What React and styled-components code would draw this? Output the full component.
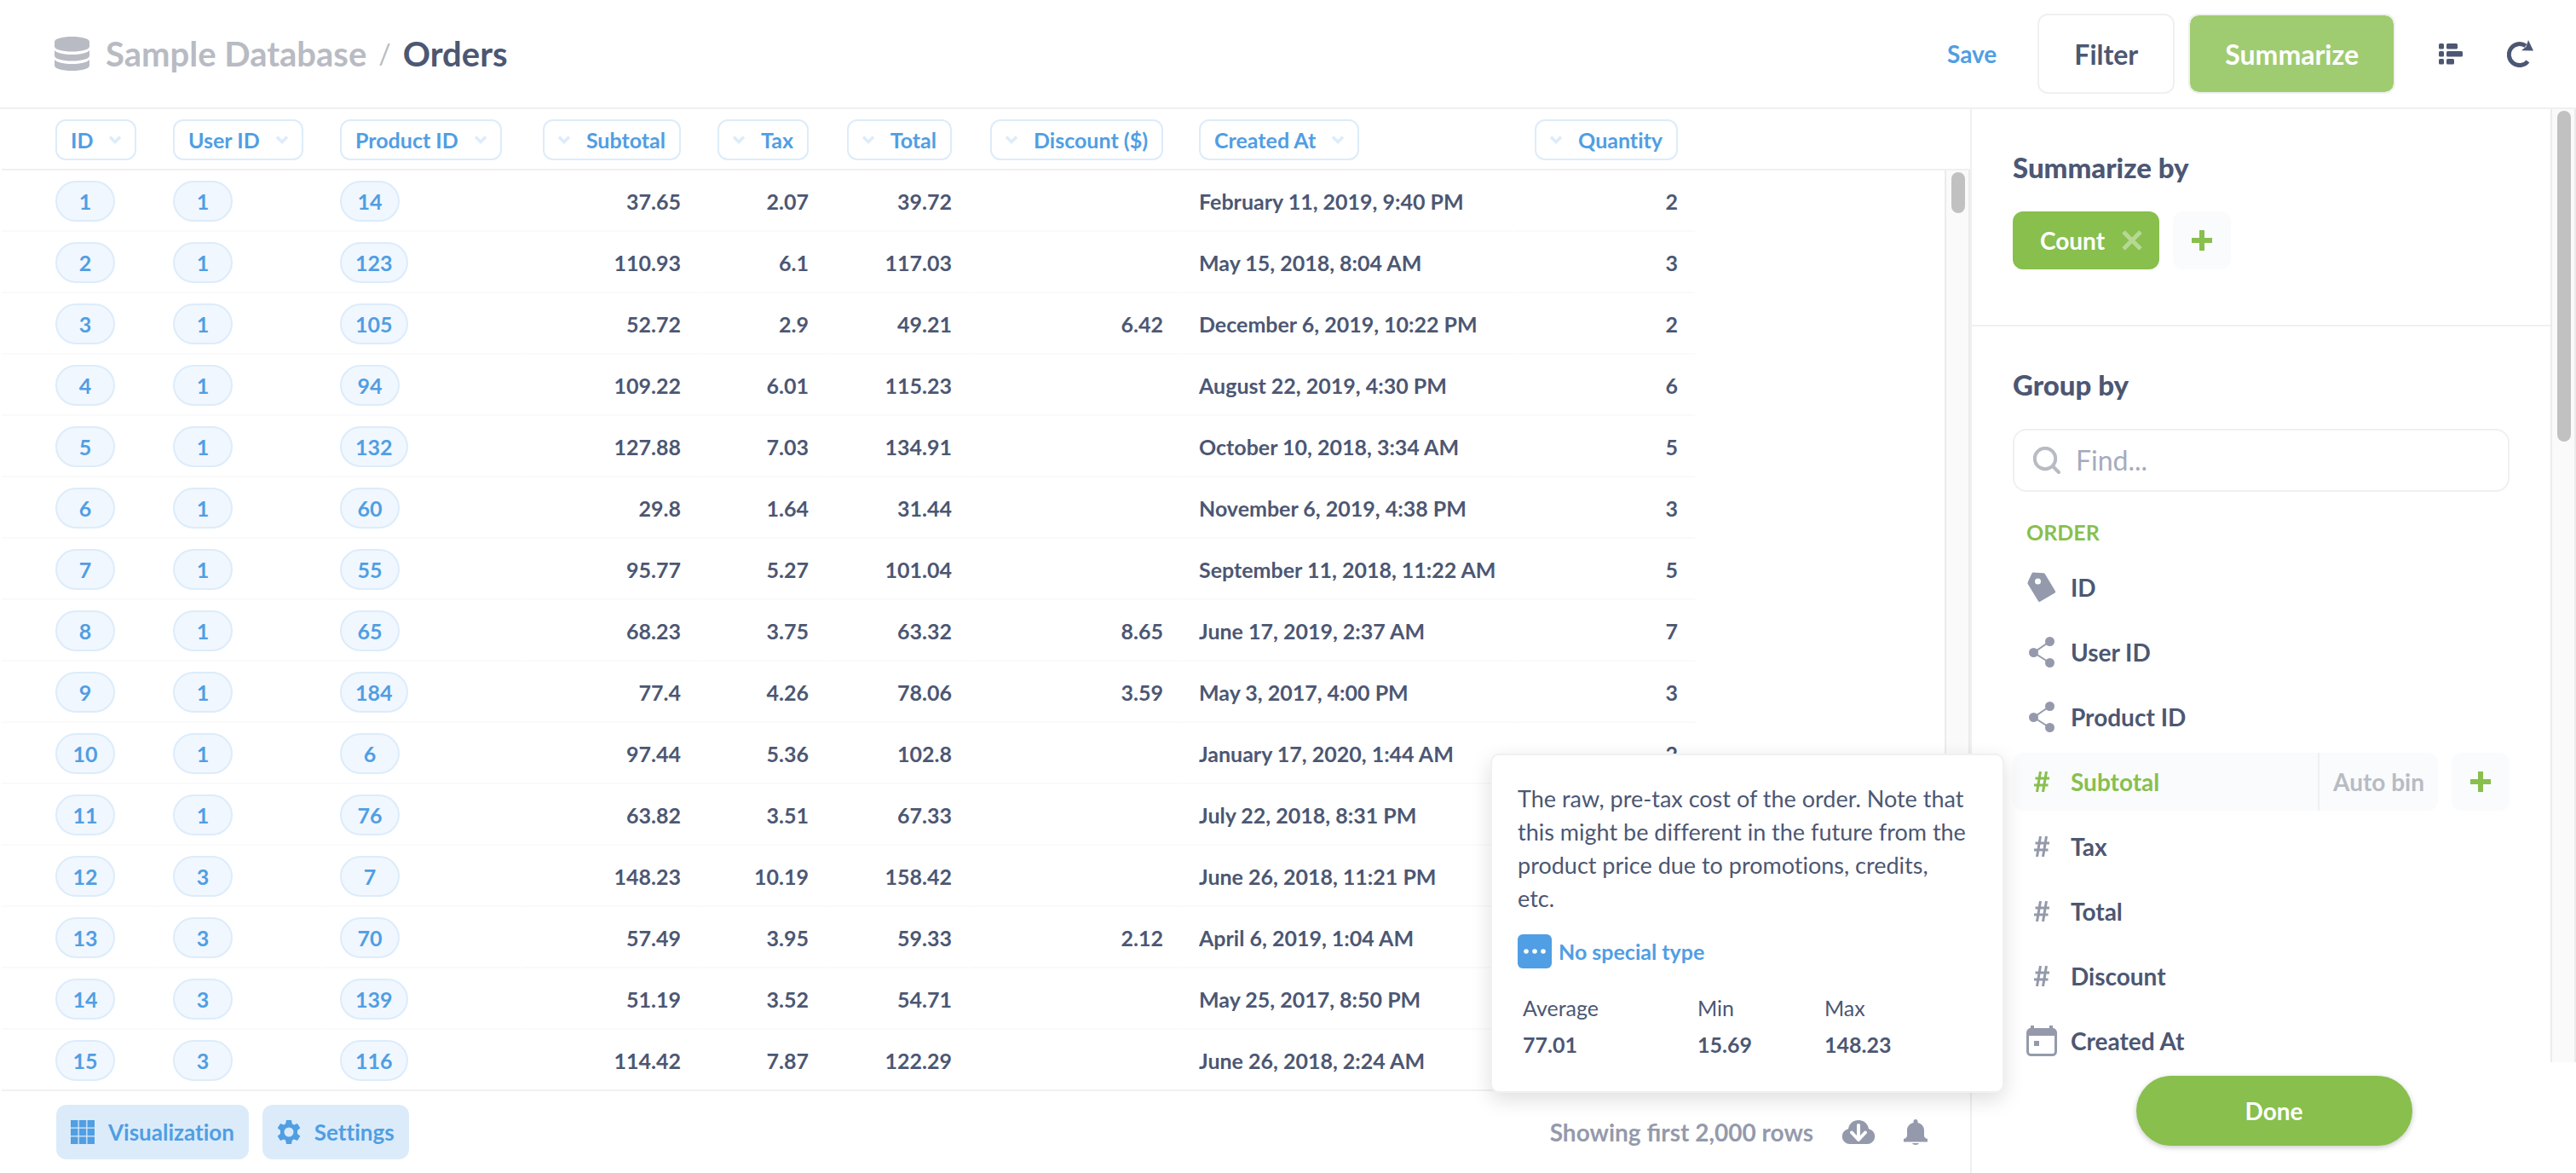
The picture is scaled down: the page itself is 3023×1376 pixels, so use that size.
import React from "react";
import styled, { createGlobalStyle, css } from "styled-components";

const color = {
  text: "#4C5773",
  medium: "#949AAB",
  light: "#B8BBC3",
  brand: "#509EE3",
  brandLight: "#DDECFA",
  brandPale: "#F0F7FE",
  green: "#88BF4D",
  border: "#F0F0F0",
  rowBorder: "#FAFAFA",
  surface: "#F9FBFD",
};

const GlobalStyle = createGlobalStyle`
  *, *::before, *::after { box-sizing: border-box; }
  body {
    margin: 0;
    background: #fff;
    color: ${color.text};
    font-family: Lato, "Open Sans", sans-serif;
    font-variant-ligatures: no-common-ligatures;
    -webkit-font-smoothing: antialiased;
  }
  button, input { font-family: inherit; font-variant-ligatures: inherit; }
  svg { display: block; flex: none; }
`;

/* ---------- icons ---------- */

const DatabaseIcon = () => (
  <svg width="41" height="40" viewBox="0 0 41 40" fill={color.light} aria-hidden="true">
    <path d="M0 6C0 2.500 9 0 20.500 0S41 2.500 41 6v5.500c0 3.500-9 6-20.500 6S0 15 0 11.500z" />
    <path d="M0 16c3 3.500 11 5 20.500 5S38 19.500 41 16v6.500c0 3.500-9 6-20.500 6S0 26 0 22.500z" />
    <path d="M0 27c3 3.500 11 5 20.500 5S38 30.500 41 27v7c0 3.500-9 6-20.500 6S0 37.500 0 34z" />
  </svg>
);

const ListIcon = () => (
  <svg width="28" height="25" viewBox="0 0 28 25" fill="currentColor" aria-hidden="true">
    <rect width="6" height="6.500" rx="1.500" />
    <rect x="9" width="13" height="6.500" rx="1.500" />
    <rect y="9" width="6" height="6.500" rx="1.500" />
    <rect x="9" y="9" width="19" height="6.500" rx="1.500" />
    <rect y="18" width="6" height="6.500" rx="1.500" />
    <rect x="9" y="18" width="9" height="6.500" rx="1.500" />
  </svg>
);

const RefreshIcon = () => (
  <svg width="31" height="32" viewBox="0 0 31 32" aria-hidden="true">
    <path d="M22 6.800A12.500 12.500 0 1 0 24.500 25" fill="none" stroke="currentColor" strokeWidth="5" />
    <path d="M25 0l6 12.600-14-.400 5.500-4.400z" fill="currentColor" />
  </svg>
);

const ChevronIcon = () => (
  <svg width="14" height="10" viewBox="0 0 14 10" fill="none" stroke={color.brandLight} strokeWidth="3.500" aria-hidden="true">
    <path d="M1 1.500l6 6 6-6" />
  </svg>
);

const CloseIcon = () => (
  <svg width="24" height="24" viewBox="0 0 24 24" fill="none" stroke="#fff" strokeOpacity="0.4" strokeWidth="5" aria-hidden="true">
    <path d="M2 2l20 20M22 2L2 22" />
  </svg>
);

const PlusIcon = () => (
  <svg width="24" height="24" viewBox="0 0 24 24" fill={color.green} aria-hidden="true">
    <path d="M9 0h6v9h9v6h-9v9H9v-9H0V9h9z" />
  </svg>
);

const SearchIcon = () => (
  <svg width="32" height="32" viewBox="0 0 32 32" fill="none" stroke={color.light} strokeWidth="4" strokeLinecap="round" aria-hidden="true">
    <circle cx="14" cy="14" r="12.200" />
    <path d="M23 23l7 7" />
  </svg>
);

const TagIcon = () => (
  <svg width="34" height="36" viewBox="0 0 34 36" fill="currentColor" aria-hidden="true">
    <path
      fillRule="evenodd"
      d="M7 .500l12 .700a2.500 2.500 0 0 1 2 1.200L33 22.500a1.500 1.500 0 0 1-.5 2L15 34.700a1.500 1.500 0 0 1-2-.5L.700 14a2.500 2.500 0 0 1 0-2.300L5.500 1.500A1.500 1.500 0 0 1 7 .500zM12.500 7.500a3.500 3.500 0 1 0 0 7 3.500 3.500 0 0 0 0-7z"
    />
  </svg>
);

const ShareIcon = () => (
  <svg width="30" height="36" viewBox="0 0 30 36" fill="currentColor" aria-hidden="true">
    <path d="M24.500 5.500L5.500 18.500l19 12" fill="none" stroke="currentColor" strokeWidth="2" />
    <circle cx="24.500" cy="5.500" r="5.500" />
    <circle cx="5.500" cy="18.500" r="5.500" />
    <circle cx="24.500" cy="30.500" r="5.500" />
  </svg>
);

const NumberIcon = () => (
  <svg width="18" height="24" viewBox="0 0 18 24" fill="none" stroke="currentColor" strokeWidth="3" aria-hidden="true">
    <path d="M7.500 0l-4 24M14.500 0l-4 24M1.500 8H18M0 16h16.500" />
  </svg>
);

const CalendarIcon = () => (
  <svg width="36" height="36" viewBox="0 0 36 36" fill="currentColor" aria-hidden="true">
    <rect x="1.500" y="4.500" width="33" height="30" rx="4" fill="none" stroke="currentColor" strokeWidth="3" />
    <path d="M1 12V7.500C1 5 3 3 5 3V0h4v3h18V0h4v3c2 0 4 2 4 4.500V12zM9 18h6v6H9z" />
  </svg>
);

const GridIcon = () => (
  <svg width="28" height="28" viewBox="0 0 28 28" fill="currentColor" aria-hidden="true">
    <path d="M0 0h8.500v8.500H0zM9.800 0h8.400v8.500H9.800zM19.500 0H28v8.500h-8.500zM0 9.800h8.500v8.400H0zM9.800 9.800h8.400v8.400H9.800zM19.500 9.800H28v8.400h-8.500zM0 19.500h8.500V28H0zM9.800 19.500h8.400V28H9.800zM19.500 19.500H28V28h-8.500z" />
  </svg>
);

const GearIcon = () => (
  <svg width="28" height="28" viewBox="0 0 28 28" fill="currentColor" aria-hidden="true">
    <path
      fillRule="evenodd"
      d="M11 0h6l.8 4.200 2.200 1.300 4-1.500 3.300 5.200-3.300 2.800v4l3.300 2.800L24 24l-4-1.500-2.200 1.300L17 28h-6l-.8-4.200L8 22.500 4 24 .7 18.800 4 16v-4L.7 9.200 4 4l4 1.500 2.200-1.300zM14 8.500a5.500 5.500 0 1 0 0 11 5.500 5.500 0 0 0 0-11z"
    />
  </svg>
);

const CloudIcon = () => (
  <svg width="40" height="28" viewBox="0 0 40 28" aria-hidden="true">
    <path d="M9 28a9 9 0 0 1-1-17.800C9 4 14 0 20 0s11 4 12 10.200A9 9 0 0 1 31 28z" fill="currentColor" />
    <path d="M20 6v17M12 14.500l8 8.500 8-8.500" fill="none" stroke="#fff" strokeWidth="4" strokeLinecap="round" strokeLinejoin="round" />
  </svg>
);

const BellIcon = () => (
  <svg width="28" height="30" viewBox="0 0 28 30" fill="currentColor" aria-hidden="true">
    <path d="M14 0c1.500 0 2.500 1 2.500 2.500V4C21 5 24 8.500 24 13v6c0 2 1.500 3.500 4 4v3.500H0V23c2.500-.5 4-2 4-4v-6c0-4.500 3-8 7.500-9V2.500C11.500 1 12.500 0 14 0zM10 28h8c-.5 1.300-2 2-4 2s-3.500-.7-4-2z" />
  </svg>
);

const EllipsisIcon = () => (
  <svg width="26" height="6" viewBox="0 0 26 6" fill="#fff" aria-hidden="true">
    <circle cx="3" cy="3" r="2.800" />
    <circle cx="13" cy="3" r="2.800" />
    <circle cx="23" cy="3" r="2.800" />
  </svg>
);

/* ---------- page frame ---------- */

const Page = styled.div`
  display: flex;
  flex-direction: column;
  height: 100vh;
  overflow: hidden;
`;

const TopBar = styled.header`
  display: flex;
  align-items: center;
  flex: none;
  height: 128px;
  padding: 0 50px 0 64px;
  border-bottom: 2px solid ${color.border};
`;

const Breadcrumb = styled.nav`
  display: flex;
  align-items: center;
  gap: 19px;
  flex: 1;
  font-size: 40px;
  line-height: 48px;
  font-weight: 700;
`;

const Crumbs = styled.div`
  display: flex;
  align-items: center;
  gap: 14px;
`;

const CrumbLink = styled.a`
  color: ${color.light};
  text-decoration: none;
`;

const Slash = styled.span`
  color: ${color.light};
  font-size: 32px;
  font-weight: 400;
`;

const Title = styled.h1`
  margin: 0;
  font-size: inherit;
  font-weight: inherit;
`;

const plainButton = css`
  border: 0;
  padding: 0;
  background: none;
  cursor: pointer;
`;

const SaveLink = styled.a`
  margin-right: 48px;
  color: ${color.brand};
  font-size: 28px;
  font-weight: 700;
  text-decoration: none;
`;

const ModeButton = styled.button`
  height: 94px;
  margin-right: 16px;
  padding: 0 41px;
  border: 2px solid ${color.border};
  border-radius: 12px;
  background: ${(p) => (p.$active ? "#A0CC71" : "#fff")};
  background-clip: padding-box;
  color: ${(p) => (p.$active ? "#fff" : color.text)};
  font-size: 32px;
  font-weight: 700;
  cursor: pointer;
`;

const IconActions = styled.div`
  display: flex;
  align-items: center;
  gap: 52px;
  margin-left: 35px;
`;

const IconButton = styled.button`
  ${plainButton}
  color: inherit;
`;

const Main = styled.div`
  display: flex;
  flex: 1;
  min-height: 0;
`;

const ResultPane = styled.main`
  display: flex;
  flex-direction: column;
  flex: 1;
  min-width: 0;
  padding-left: 2px;
`;

const TableArea = styled.div`
  display: flex;
  flex: 1;
  min-height: 0;
  overflow: hidden;
`;

/* ---------- scroll bars ---------- */

const TrackColumn = styled.div`
  display: flex;
  flex-direction: column;
  flex: none;
`;

const TrackHead = styled.div`
  height: 72px;
  border-bottom: 2px solid ${color.border};
`;

const Track = styled.div`
  flex: 1;
  width: 30px;
  padding: 2px 4px 2px 6px;
  border: solid #ebebeb;
  border-width: 0 2px;
  background: #fafafa;
`;

const Thumb = styled.div`
  height: ${(p) => p.$length}px;
  border-radius: 8px;
  background: #c1c1c1;
`;

/* ---------- result table ---------- */

const ResultTable = styled.table`
  flex: 1;
  min-width: 0;
  width: 100%;
  table-layout: fixed;
  border-collapse: separate;
  border-spacing: 0;
  align-self: flex-start;
  font-size: 25px;
  font-weight: 700;
  line-height: 48px;
`;

const Col = styled.col`
  width: ${(p) => (p.$width ? `${p.$width}px` : "auto")};
`;

const HeadCell = styled.th`
  height: 72px;
  padding: ${(p) => (p.$first ? "12px 0 10px 63px" : "12px 21px 10px")};
  border-bottom: 2px solid ${color.border};
  text-align: ${(p) => (p.$right ? "right" : "left")};
  white-space: nowrap;
`;

const HeadButton = styled.button`
  display: inline-flex;
  flex-direction: ${(p) => (p.$right ? "row-reverse" : "row")};
  align-items: center;
  gap: 19px;
  height: 48px;
  padding: 0 16px;
  border: 2px solid ${color.brandLight};
  border-radius: 12px;
  background: #fff;
  color: ${color.brand};
  font-size: 25px;
  font-weight: 700;
  line-height: 44px;
  vertical-align: top;
  cursor: pointer;
`;

const Cell = styled.td`
  height: 72px;
  padding: ${(p) => (p.$first ? "12px 0 10px 63px" : "12px 19px 10px 21px")};
  border-right: 2px solid transparent;
  border-bottom: 2px solid ${(p) => (p.$blank ? "transparent" : color.rowBorder)};
  text-align: ${(p) => (p.$right ? "right" : "left")};
  white-space: nowrap;
`;

const Pill = styled.a`
  display: inline-block;
  min-width: 70px;
  height: 48px;
  padding: 0 16px;
  border: 2px solid ${color.brandLight};
  border-radius: 24px;
  background: ${color.brandPale};
  color: ${color.brand};
  line-height: 44px;
  text-align: center;
  text-decoration: none;
  vertical-align: top;
`;

const Footer = styled.footer`
  display: flex;
  align-items: center;
  flex: none;
  height: 98px;
  padding: 0 50px 0 64px;
  border-top: 2px solid ${color.border};
`;

const FooterButton = styled.button`
  display: flex;
  align-items: center;
  gap: 16px;
  height: 64px;
  margin-right: 16px;
  padding: 0 17px;
  border: 0;
  border-radius: 12px;
  background: #dbebfa;
  color: ${color.brand};
  font-size: 26px;
  font-weight: 700;
  cursor: pointer;
`;

const FooterStatus = styled.div`
  display: flex;
  align-items: center;
  gap: 33px;
  margin-left: auto;
  color: ${color.medium};
  font-size: 28px;
  font-weight: 700;
  font-variant-ligatures: normal;
`;

/* ---------- sidebar ---------- */

const Sidebar = styled.aside`
  position: relative;
  display: flex;
  flex-direction: column;
  flex: none;
  width: 711px;
  border-left: 2px solid ${color.border};
`;

const SidebarScroll = styled.div`
  display: flex;
  flex: 1;
  min-height: 0;
`;

const SidebarContent = styled.div`
  flex: 1;
  overflow: hidden;
`;

const Section = styled.section`
  padding: 48px 48px ${(p) => (p.$divided ? "65px" : "0")};
  border-bottom: ${(p) => (p.$divided ? `2px solid ${color.border}` : "0")};
`;

const SectionTitle = styled.h2`
  margin: 0 0 32px;
  font-size: 33px;
  line-height: 40px;
  font-weight: 900;
`;

const Metrics = styled.div`
  display: flex;
  gap: 16px;
`;

const MetricButton = styled.button`
  display: flex;
  align-items: center;
  gap: 20px;
  height: 68px;
  padding: 0 20px 0 32px;
  border: 0;
  border-radius: 12px;
  background: ${color.green};
  color: #fff;
  font-size: 28px;
  font-weight: 700;
  cursor: pointer;
`;

const AddButton = styled.button`
  ${plainButton}
  display: grid;
  place-items: center;
  flex: none;
  width: 68px;
  height: 68px;
  border-radius: 12px;
  background: ${color.surface};
`;

const SearchBox = styled.label`
  display: flex;
  align-items: center;
  gap: 18px;
  height: 74px;
  padding: 0 22px;
  border: 2px solid ${color.border};
  border-radius: 16px;
`;

const SearchInput = styled.input`
  flex: 1;
  min-width: 0;
  padding: 0;
  border: 0;
  outline: 0;
  background: none;
  color: ${color.text};
  font-size: 32px;
  line-height: 40px;
  &::placeholder { color: #a5abbd; opacity: 1; }
`;

const GroupName = styled.h3`
  margin: 32px 16px 16px;
  color: ${color.green};
  font-size: 25px;
  line-height: 30px;
  font-weight: 700;
  text-transform: uppercase;
`;

const FieldList = styled.ul`
  display: flex;
  flex-direction: column;
  gap: 8px;
  margin: 0;
  padding: 0;
  list-style: none;
`;

const FieldRow = styled.li`
  display: flex;
  gap: 16px;
  height: 68px;
`;

const FieldBody = styled.div`
  display: flex;
  flex: 1;
  border-radius: 12px;
  background: ${(p) => (p.$hovered ? color.surface : "none")};
`;

const FieldButton = styled.button`
  ${plainButton}
  display: flex;
  align-items: center;
  gap: 16px;
  flex: 1;
  padding-left: 16px;
  color: ${(p) => (p.$hovered ? color.green : color.text)};
  font-size: 28px;
  font-weight: 700;
  text-align: left;
`;

const FieldIcon = styled.span`
  display: grid;
  place-items: center;
  width: 36px;
  color: ${(p) => (p.$hovered ? color.green : color.medium)};
`;

const BinButton = styled.button`
  ${plainButton}
  padding: 0 16px;
  border-left: 2px solid ${color.border};
  color: ${color.light};
  font-size: 28px;
  font-weight: 700;
`;

const SidebarFooter = styled.div`
  display: flex;
  justify-content: center;
  flex: none;
  padding: 16px 0 32px;
`;

const DoneButton = styled.button`
  width: 324px;
  height: 82px;
  border: 0;
  border-radius: 41px;
  background: ${color.green};
  box-shadow: 0 2px 6px rgba(0, 0, 0, 0.22);
  color: #fff;
  font-size: 28px;
  font-weight: 700;
  cursor: pointer;
`;

/* ---------- field popover ---------- */

const Popover = styled.div`
  position: absolute;
  top: 756px;
  right: calc(100% - 38px);
  width: 603px;
  padding: 31px 20px 40px 30px;
  border: 2px solid ${color.border};
  border-radius: 10px;
  background: #fff;
  box-shadow: 0 8px 24px rgba(0, 0, 0, 0.13);
`;

const Description = styled.p`
  margin: 0 0 23px;
  font-size: 27px;
  line-height: 39px;
`;

const TypeRow = styled.div`
  display: flex;
  align-items: center;
  gap: 8px;
  color: ${color.brand};
  font-size: 25px;
  font-weight: 700;
`;

const TypeBadge = styled.span`
  display: grid;
  place-items: center;
  width: 40px;
  height: 40px;
  border-radius: 6px;
  background: ${color.brand};
`;

const StatTable = styled.table`
  width: 100%;
  margin-top: 25px;
  border-collapse: collapse;
  table-layout: fixed;
  font-size: 25px;
  line-height: 30px;
`;

const StatHead = styled.th`
  padding: 6px;
  font-weight: 400;
  text-align: left;
`;

const StatValue = styled.td`
  padding: 7px 6px 0;
  font-weight: 700;
`;

/* ---------- data ---------- */

const columns = [
  { name: "ID", width: 180, pill: true },
  { name: "User ID", width: 196, pill: true },
  { name: "Product ID", width: 234, pill: true },
  { name: "Subtotal", width: 208, right: true },
  { name: "Tax", width: 150, right: true },
  { name: "Total", width: 168, right: true },
  { name: "Discount ($)", width: 248, right: true },
  { name: "Created At", width: 390 },
  { name: "Quantity", width: 214, right: true },
];

const rows = [
  ["1", "1", "14", "37.65", "2.07", "39.72", "", "February 11, 2019, 9:40 PM", "2"],
  ["2", "1", "123", "110.93", "6.1", "117.03", "", "May 15, 2018, 8:04 AM", "3"],
  ["3", "1", "105", "52.72", "2.9", "49.21", "6.42", "December 6, 2019, 10:22 PM", "2"],
  ["4", "1", "94", "109.22", "6.01", "115.23", "", "August 22, 2019, 4:30 PM", "6"],
  ["5", "1", "132", "127.88", "7.03", "134.91", "", "October 10, 2018, 3:34 AM", "5"],
  ["6", "1", "60", "29.8", "1.64", "31.44", "", "November 6, 2019, 4:38 PM", "3"],
  ["7", "1", "55", "95.77", "5.27", "101.04", "", "September 11, 2018, 11:22 AM", "5"],
  ["8", "1", "65", "68.23", "3.75", "63.32", "8.65", "June 17, 2019, 2:37 AM", "7"],
  ["9", "1", "184", "77.4", "4.26", "78.06", "3.59", "May 3, 2017, 4:00 PM", "3"],
  ["10", "1", "6", "97.44", "5.36", "102.8", "", "January 17, 2020, 1:44 AM", "2"],
  ["11", "1", "76", "63.82", "3.51", "67.33", "", "July 22, 2018, 8:31 PM", ""],
  ["12", "3", "7", "148.23", "10.19", "158.42", "", "June 26, 2018, 11:21 PM", ""],
  ["13", "3", "70", "57.49", "3.95", "59.33", "2.12", "April 6, 2019, 1:04 AM", ""],
  ["14", "3", "139", "51.19", "3.52", "54.71", "", "May 25, 2017, 8:50 PM", ""],
  ["15", "3", "116", "114.42", "7.87", "122.29", "", "June 26, 2018, 2:24 AM", ""],
];

const fields = [
  { name: "ID", Icon: TagIcon },
  { name: "User ID", Icon: ShareIcon },
  { name: "Product ID", Icon: ShareIcon },
  { name: "Subtotal", Icon: NumberIcon, hovered: true },
  { name: "Tax", Icon: NumberIcon },
  { name: "Total", Icon: NumberIcon },
  { name: "Discount", Icon: NumberIcon },
  { name: "Created At", Icon: CalendarIcon },
];

/* ---------- parts ---------- */

function Results() {
  return (
    <TableArea>
      <ResultTable>
        <colgroup>
          {columns.map((c) => (
            <Col key={c.name} $width={c.width} />
          ))}
          <Col />
        </colgroup>
        <thead>
          <tr>
            {columns.map((c, i) => (
              <HeadCell key={c.name} scope="col" $first={i === 0} $right={c.right}>
                <HeadButton type="button" $right={c.right}>
                  {c.name}
                  <ChevronIcon />
                </HeadButton>
              </HeadCell>
            ))}
            <HeadCell as="td" />
          </tr>
        </thead>
        <tbody>
          {rows.map((row) => (
            <tr key={row[0]}>
              {row.map((value, i) => (
                <Cell key={columns[i].name} $first={i === 0} $right={columns[i].right}>
                  {columns[i].pill ? <Pill href="#">{value}</Pill> : value}
                </Cell>
              ))}
              <Cell $blank />
            </tr>
          ))}
        </tbody>
      </ResultTable>
      <TrackColumn aria-hidden="true">
        <TrackHead />
        <Track>
          <Thumb $length={48} />
        </Track>
      </TrackColumn>
    </TableArea>
  );
}

function Field({ name, Icon, hovered }) {
  return (
    <FieldRow>
      <FieldBody $hovered={hovered}>
        <FieldButton type="button" $hovered={hovered}>
          <FieldIcon $hovered={hovered}>
            <Icon />
          </FieldIcon>
          {name}
        </FieldButton>
        {hovered && <BinButton type="button">Auto bin</BinButton>}
      </FieldBody>
      {hovered && (
        <AddButton type="button" aria-label={`Add ${name}`}>
          <PlusIcon />
        </AddButton>
      )}
    </FieldRow>
  );
}

function FieldPopover() {
  return (
    <Popover role="tooltip">
      <Description>
        The raw, pre-tax cost of the order. Note that this might be different in the future from the
        product price due to promotions, credits,
        <br />
        etc.
      </Description>
      <TypeRow>
        <TypeBadge>
          <EllipsisIcon />
        </TypeBadge>
        No special type
      </TypeRow>
      <StatTable>
        <colgroup>
          <Col $width={205} />
          <Col $width={149} />
          <Col />
        </colgroup>
        <thead>
          <tr>
            <StatHead scope="col">Average</StatHead>
            <StatHead scope="col">Min</StatHead>
            <StatHead scope="col">Max</StatHead>
          </tr>
        </thead>
        <tbody>
          <tr>
            <StatValue>77.01</StatValue>
            <StatValue>15.69</StatValue>
            <StatValue>148.23</StatValue>
          </tr>
        </tbody>
      </StatTable>
    </Popover>
  );
}

export default function App() {
  return (
    <Page>
      <GlobalStyle />
      <TopBar>
        <Breadcrumb aria-label="Breadcrumb">
          <DatabaseIcon />
          <Crumbs>
            <CrumbLink href="#">Sample Database</CrumbLink>
            <Slash>/</Slash>
            <Title>Orders</Title>
          </Crumbs>
        </Breadcrumb>
        <SaveLink href="#">Save</SaveLink>
        <ModeButton type="button">Filter</ModeButton>
        <ModeButton type="button" $active>
          Summarize
        </ModeButton>
        <IconActions>
          <IconButton type="button" aria-label="Show editor">
            <ListIcon />
          </IconButton>
          <IconButton type="button" aria-label="Refresh">
            <RefreshIcon />
          </IconButton>
        </IconActions>
      </TopBar>
      <Main>
        <ResultPane>
          <Results />
          <Footer>
            <FooterButton type="button">
              <GridIcon />
              Visualization
            </FooterButton>
            <FooterButton type="button">
              <GearIcon />
              Settings
            </FooterButton>
            <FooterStatus>
              <span>Showing first 2,000 rows</span>
              <IconButton type="button" aria-label="Download results">
                <CloudIcon />
              </IconButton>
              <IconButton type="button" aria-label="Get alerts">
                <BellIcon />
              </IconButton>
            </FooterStatus>
          </Footer>
        </ResultPane>
        <Sidebar>
          <SidebarScroll>
            <SidebarContent>
              <Section $divided>
                <SectionTitle>Summarize by</SectionTitle>
                <Metrics>
                  <MetricButton type="button">
                    Count
                    <CloseIcon />
                  </MetricButton>
                  <AddButton type="button" aria-label="Add metric">
                    <PlusIcon />
                  </AddButton>
                </Metrics>
              </Section>
              <Section>
                <SectionTitle>Group by</SectionTitle>
                <SearchBox>
                  <SearchIcon />
                  <SearchInput type="text" placeholder="Find..." aria-label="Find a field" />
                </SearchBox>
                <GroupName>Order</GroupName>
                <FieldList>
                  {fields.map((f) => (
                    <Field key={f.name} {...f} />
                  ))}
                </FieldList>
              </Section>
            </SidebarContent>
            <TrackColumn aria-hidden="true">
              <Track>
                <Thumb $length={388} />
              </Track>
            </TrackColumn>
          </SidebarScroll>
          <SidebarFooter>
            <DoneButton type="button">Done</DoneButton>
          </SidebarFooter>
          <FieldPopover />
        </Sidebar>
      </Main>
    </Page>
  );
}
